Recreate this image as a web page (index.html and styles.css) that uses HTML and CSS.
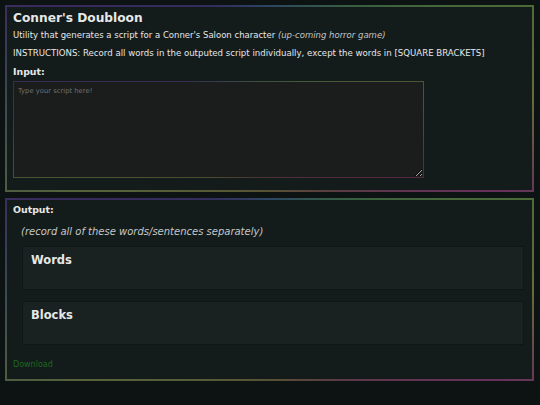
FILE: index.html
```html
<!DOCTYPE html>
<html>
<head>
<meta charset="utf-8">
<link rel="stylesheet" href="styles.css">
</head>
<body>
<section class="panel panel-input">
  <h2 class="title">Conner's Doubloon</h2>
  <p class="subtitle">Utility that generates a script for a Conner's Saloon character <em>(up-coming horror game)</em></p>
  <p class="instructions">INSTRUCTIONS: Record all words in the outputed script individually, except the words in [SQUARE BRACKETS]</p>
  <h3 class="label">Input:</h3>
  <textarea class="script-input" placeholder="Type your script here!"></textarea>
</section>
<section class="panel panel-output">
  <h3 class="label">Output:</h3>
  <p class="note">(record all of these words/sentences separately)</p>
  <div class="card"><h2 class="card-title">Words</h2></div>
  <div class="card"><h2 class="card-title">Blocks</h2></div>
  <a class="download" href="#">Download</a>
</section>
</body>
</html>
```
FILE: styles.css
```css
html, body {
  margin: 0;
  background: #0d1313;
}
body {
  padding: 5px 6px 0 5px;
  font-family: "DejaVu Sans", Verdana, sans-serif;
  color: #e6e8e8;
}
.panel {
  border: 2px solid transparent;
  background:
    linear-gradient(#141b1b, #141b1b) padding-box,
    conic-gradient(from 0deg,
      #2c4663 0deg, #38603f 45deg, #4c6a38 70deg, #666c3a 90deg,
      #66305a 112deg, #5a3a44 140deg, #585234 180deg, #56623a 245deg,
      #3a4a52 270deg, #3a2a5e 292deg, #322f5e 330deg, #2c4663 360deg) border-box;
  padding: 3px 6px 0 6px;
  box-sizing: border-box;
}
.panel-input {
  height: 187px;
}
.panel-output {
  margin-top: 6px;
  height: 183px;
}
.title {
  margin: 0;
  font-size: 12.2px;
  line-height: 16px;
  font-weight: bold;
}
.subtitle {
  margin: 4px 0 0;
  font-size: 8.5px;
  line-height: 10px;
}
.subtitle em {
  color: #c4c8c8;
}
.instructions {
  margin: 8px 0 0;
  font-size: 8.6px;
  line-height: 11px;
}
.label {
  margin: 7px 0 0;
  font-size: 9.4px;
  line-height: 12px;
  font-weight: bold;
}
.script-input {
  display: block;
  margin-top: 3px;
  width: 411px;
  height: 97px;
  box-sizing: border-box;
  resize: both;
  border: 1px solid transparent;
  background:
    linear-gradient(#1b1d1c, #1b1d1c) padding-box,
    conic-gradient(from 0deg,
      #363c4c 0deg, #44583a 60deg, #4c5632 77deg, #4e4a36 90deg,
      #55283e 103deg, #4c3434 140deg, #4a4a30 180deg, #4a5430 255deg,
      #3c3c44 270deg, #3a2a50 285deg, #363050 330deg, #363c4c 360deg) border-box;
  color: #d0d0d0;
  font-family: "DejaVu Sans", sans-serif;
  font-size: 6.8px;
  padding: 5px 4px;
  outline: none;
}
.script-input::placeholder {
  color: #6e7272;
}
.panel-output .label {
  margin-top: 1px;
}
.note {
  margin: 9px 0 0 8px;
  font-size: 10px;
  line-height: 13px;
  font-style: italic;
  color: #c4c8c8;
}
.card {
  margin: 8px 2px 0 9px;
  height: 44px;
  box-sizing: border-box;
  background: #1a2121;
  border: 1px solid #101616;
  padding: 6px 8px;
}
.card + .card {
  margin-top: 11px;
}
.card-title {
  margin: 0;
  font-size: 11.5px;
  line-height: 15px;
  font-weight: bold;
}
.download {
  display: inline-block;
  margin-top: 15px;
  font-size: 8px;
  line-height: 10px;
  color: #1d6a1d;
  text-decoration: none;
}
```
